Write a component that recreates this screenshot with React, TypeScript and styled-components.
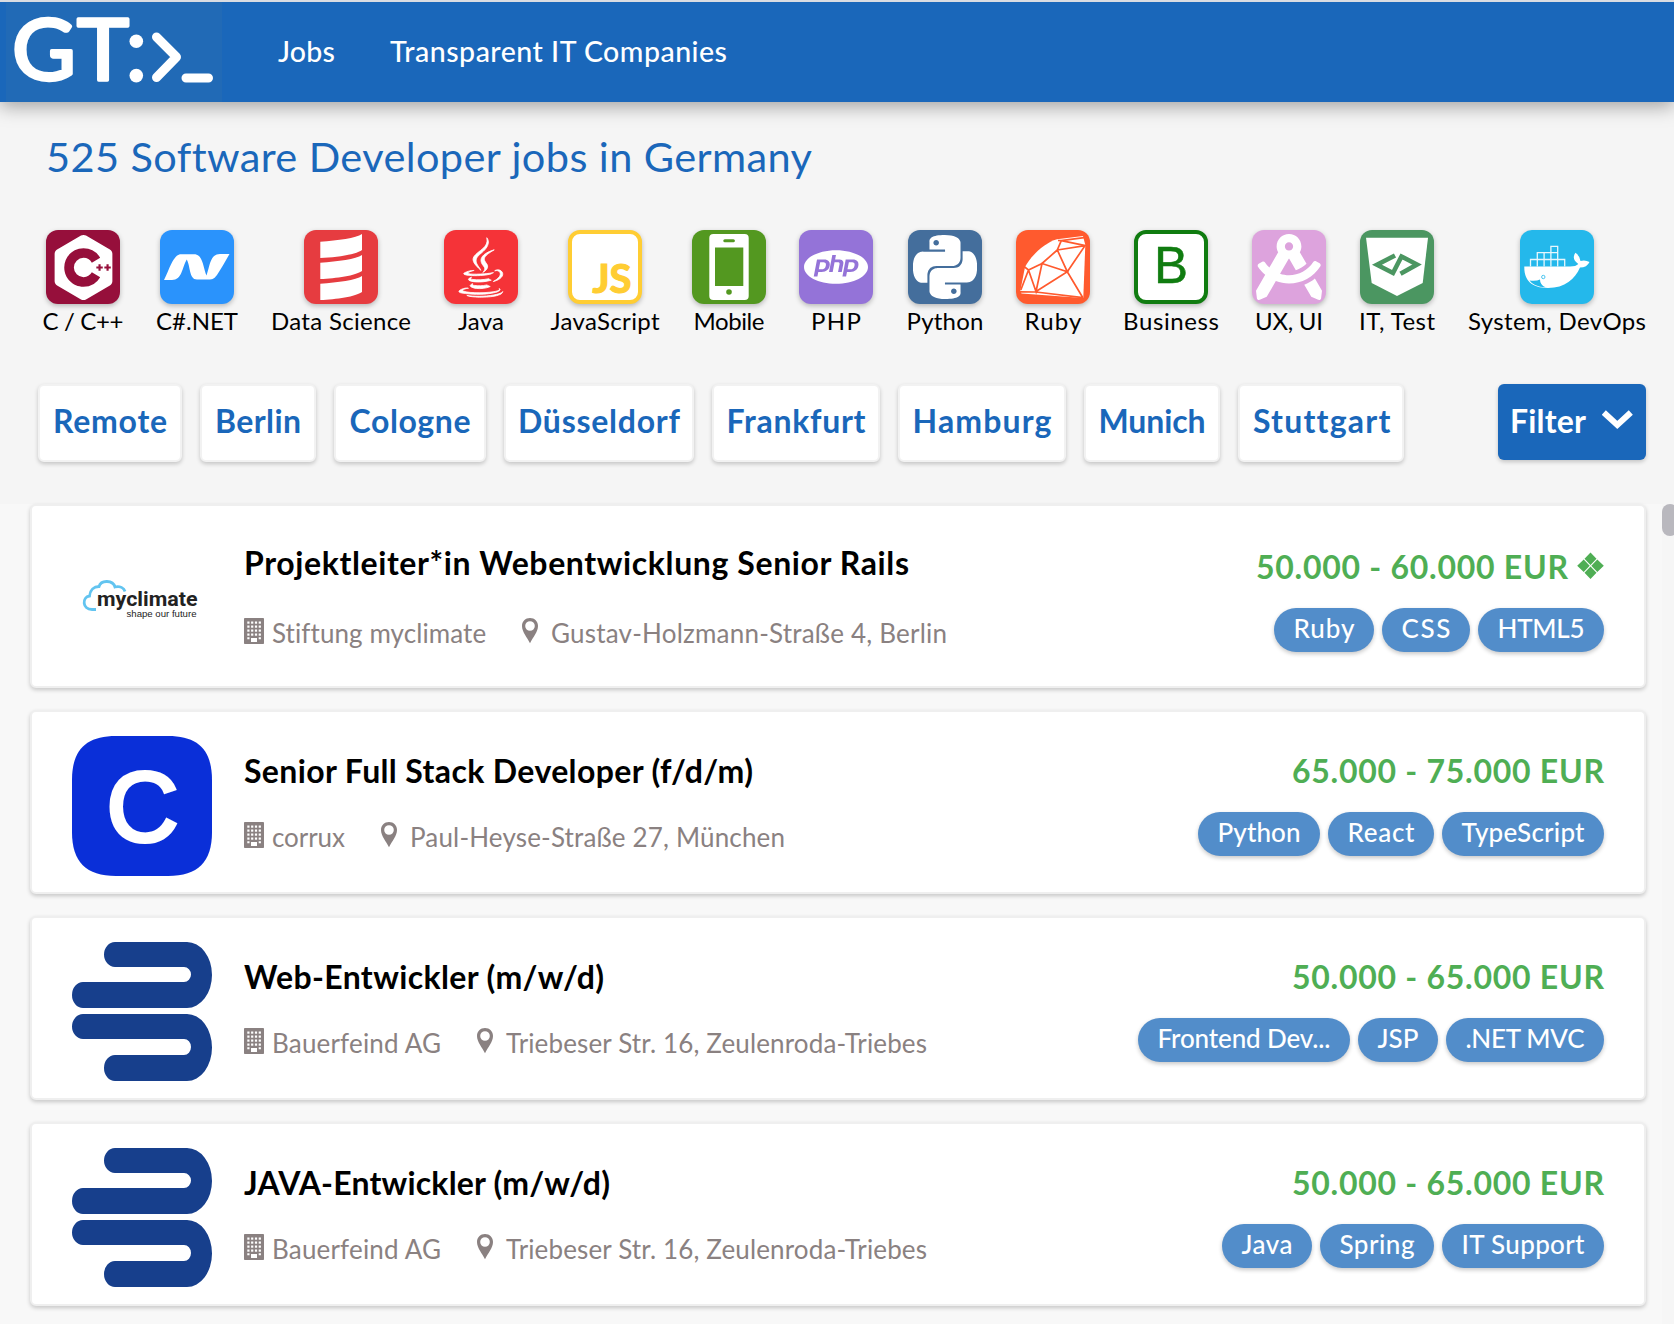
import React, { useLayoutEffect, useRef, useState } from 'react';
import styled, { createGlobalStyle } from 'styled-components';
import { SiCplusplus, SiPhp, SiPython } from 'react-icons/si';
import { DiJava } from 'react-icons/di';
import { FaDraftingCompass } from 'react-icons/fa';

const BLUE = '#1a67ba';

const GlobalStyle = createGlobalStyle`
  * { box-sizing: border-box; }
  body {
    margin: 0;
    background: #f5f5f5;
    font-family: Lato, "Open Sans", sans-serif;
    overflow: hidden;
  }
`;

const Measured = styled.span<{ $width: number }>`
  display: inline-block;
  flex: none;
  width: ${(p) => p.$width}px;
  white-space: pre;
`;

/* Tracks a label so that it fills the given measure. */
function Label({ text, width }: { text: string; width: number }) {
  const inner = useRef<HTMLSpanElement>(null);
  const [tracking, setTracking] = useState(0);
  useLayoutEffect(() => {
    if (!inner.current) return;
    const natural = inner.current.getBoundingClientRect().width - tracking * text.length;
    setTracking((width - natural) / Math.max(1, text.length - 1));
  }, [text, width]);
  return (
    <Measured $width={width}>
      <span ref={inner} style={{ letterSpacing: tracking }}>{text}</span>
    </Measured>
  );
}

const Page = styled.div`
  height: 1324px;
  display: flex;
  flex-direction: column;
  overflow: hidden;
`;

const Header = styled.header`
  flex: none;
  height: 102px;
  display: flex;
  border-top: 2px solid #d9dce2;
  background: ${BLUE};
  box-shadow: 0 4px 18px rgba(0, 0, 0, 0.36);
`;

const Brand = styled.a`
  display: block;
  width: 216px;
  height: 100px;
  margin-left: 6px;
  background: #216ab6;
  svg { overflow: visible; }
`;

const Nav = styled.nav`
  display: flex;
  gap: 55px;
  margin-left: 56px;
  padding-top: 33px;
  color: #fff;
  font-size: 28.5px;
  font-weight: 500;
  line-height: 32px;
`;

const Title = styled.h1`
  flex: none;
  margin: 30px 0 2px 46px;
  color: ${BLUE};
  font-size: 41.5px;
  font-weight: 400;
  line-height: 48px;
`;

const Categories = styled.div`
  flex: none;
  display: flex;
  gap: 32px;
  margin: 48px 0 0 43px;
`;

const Category = styled.a<{ $width: number }>`
  flex: none;
  display: flex;
  flex-direction: column;
  align-items: center;
  width: ${(p) => p.$width}px;
  color: #000;
  font-size: 24px;
  line-height: 34px;
`;

const Tile = styled.div<{ $bg: string; $border?: string }>`
  flex: none;
  display: flex;
  align-items: center;
  justify-content: center;
  width: 74px;
  height: 74px;
  overflow: hidden;
  border-radius: 12px;
  border: ${(p) => (p.$border ? `4.5px solid ${p.$border}` : 'none')};
  background: ${(p) => p.$bg};
  color: #fff;
  box-shadow: 0 2px 5px rgba(0, 0, 0, 0.25);
`;

const ScriptMark = styled.span`
  align-self: flex-end;
  margin: 0 -12px -1px 2px;
  color: #ffcd33;
  font: 700 40px/46px Lato, sans-serif;
  -webkit-text-stroke: 1.2px #ffcd33;
`;

const BusinessMark = styled.span`
  color: #107c10;
  font: 400 51px/60px "Liberation Sans", Arial, sans-serif;
  -webkit-text-stroke: 0.5px #107c10;
  transform: translateY(-1px);
`;

const Filters = styled.div`
  flex: none;
  display: flex;
  gap: 18px;
  height: 78px;
  margin: 46px 28px 0 38px;
`;

const Chip = styled.button<{ $width: number }>`
  flex: none;
  display: flex;
  justify-content: center;
  width: ${(p) => p.$width}px;
  height: 78px;
  padding: 15px 0 0;
  border: 2px solid #f2f2f2;
  border-radius: 6px;
  background: #fff;
  color: ${BLUE};
  font: 700 32px/40px Lato, sans-serif;
  box-shadow: 0 2px 4px rgba(0, 0, 0, 0.2);
`;

const FilterButton = styled.button`
  display: flex;
  gap: 16px;
  width: 148px;
  height: 76px;
  margin-left: auto;
  padding: 17px 0 0 12px;
  border: 0;
  border-radius: 6px;
  background: ${BLUE};
  color: #fff;
  font: 700 32px/40px Lato, sans-serif;
  box-shadow: 0 2px 4px rgba(0, 0, 0, 0.2);
`;

const Results = styled.main`
  flex: 1;
  display: flex;
  justify-content: space-between;
  min-height: 0;
  margin-top: 42px;
  background: #f8f8f8;
`;

const List = styled.div`
  display: flex;
  flex-direction: column;
  gap: 22px;
  width: 1616px;
  margin-left: 30px;
`;

const Track = styled.div`
  width: 12px;
  overflow: hidden;
  background: #f6f6f6;
`;

const Thumb = styled.div`
  width: 16px;
  height: 32px;
  border-radius: 8px;
  background: #b9b8be;
`;

const Card = styled.article`
  flex: none;
  display: flex;
  height: 184px;
  padding: 0 40px;
  border: 2px solid #efefef;
  border-radius: 6px;
  background: #fff;
  box-shadow: 0 2px 4px rgba(0, 0, 0, 0.2);
`;

const Logo = styled.div`
  flex: none;
  width: 140px;
  height: 140px;
  margin: 24px 32px 0 0;
`;

const Info = styled.div<{ $spread: boolean }>`
  display: flex;
  flex-direction: column;
  gap: ${(p) => (p.$spread ? 34 : 30)}px;
  padding-top: ${(p) => (p.$spread ? 37 : 39)}px;
`;

const JobTitle = styled.h2`
  margin: 0;
  color: #000;
  font-size: 32px;
  font-weight: 700;
  line-height: 40px;
`;

const Meta = styled.div`
  display: flex;
  align-items: flex-start;
  height: 32px;
  color: #8a8181;
  font-size: 26px;
  line-height: 32px;
  svg { flex: none; margin-top: 1px; }
`;

const BuildingIcon = styled.svg`
  margin-right: 8px;
`;

const PinIcon = styled.svg`
  margin-left: 36px;
  margin-right: 13px;
`;

const Offer = styled.div<{ $spread: boolean }>`
  display: flex;
  flex-direction: column;
  align-items: flex-end;
  gap: 21px;
  margin-left: auto;
  padding-top: ${(p) => (p.$spread ? 41 : 39)}px;
`;

const Salary = styled.div`
  display: flex;
  gap: 9px;
  height: 40px;
  color: #4fae54;
  font-size: 32px;
  font-weight: 700;
  line-height: 40px;
`;

const Tags = styled.div`
  display: flex;
  gap: 8px;
`;

const Tag = styled.span<{ $width: number }>`
  display: flex;
  justify-content: center;
  width: ${(p) => p.$width}px;
  height: 44px;
  border-radius: 22px;
  background: #528dca;
  color: #fff;
  font-size: 26px;
  font-weight: 500;
  line-height: 40px;
  box-shadow: 0 2px 4px rgba(0, 0, 0, 0.22);
`;

const BrandMark = () => (
  <svg width="216" height="100" viewBox="6 2 216 100" fill="#fff">
    <g fontFamily="Lato, sans-serif" fontWeight="400" fontSize="85" stroke="#fff" strokeWidth="3.4" strokeLinejoin="round">
      <text x="12" y="80.2" textLength="64" lengthAdjust="spacingAndGlyphs">G</text>
      <text x="77" y="80.2" textLength="52" lengthAdjust="spacingAndGlyphs">T</text>
    </g>
    <circle cx="136.3" cy="41.3" r="6.8" />
    <circle cx="136.3" cy="75.6" r="6.8" />
    <path d="M156.5 37 L176.5 57 L156.5 77.5 M186 78 H208.5" fill="none" stroke="#fff" strokeWidth="9" strokeLinecap="round" strokeLinejoin="round" />
  </svg>
);

const DotNetIcon = () => (
  <svg width="74" height="74" fill="#fff">
    <path d="M4 50 C9 41 13 24.3 21 24.3 H34 C43 24.3 43 37 46.5 45.5 C50 36 50 24 60 24 H69.5 C65 32 61 39 57 45 C54 49 52 49.5 49 49.5 H37 C29 49.5 30.5 36 26.7 29.5 C22 38 22 50 12 50 Z" />
  </svg>
);

const ScalaIcon = () => (
  <svg width="74" height="74" fill="#fff">
    {[0, 21, 42].map((y) => (
      <path key={y} transform={`translate(0 ${y})`} d="M16.3 11.7 C34 10.5 52 8 58 4 V20 C52 24.5 32 27.5 16.3 28 Z" />
    ))}
  </svg>
);

const MobileIcon = () => (
  <svg width="74" height="74">
    <rect x="17.3" y="4" width="39.4" height="66" rx="4" fill="#fff" />
    <rect x="23" y="17.5" width="28.3" height="38.5" fill="#539820" />
    <rect x="31.3" y="9.3" width="11.6" height="3" rx="1.5" fill="#539820" />
    <circle cx="37" cy="62" r="2.8" fill="#539820" />
  </svg>
);

const RubyIcon = () => (
  <svg width="74" height="74">
    <path d="M67 6 L69.3 15 L67.3 68 L5.5 63.5 L4.3 61 L9 37 C14 27 28 13 41 9.3 Z" fill="#fff" />
    <path
      d="M42 10.5 L45.3 10.7 L68 7.6 M45.3 10.7 L69.5 15.7 M45.3 10.7 L41.3 20 L69 15.7 L51.3 41.7 L41.3 20 L26 33.5 L12.5 40 L8 36.5 M12.5 40 L4.8 60 M12.5 40 L20 61.5 L26 33.5 L51.3 41.7 L20 61.5 M51.3 41.7 L67 68 M4 61.8 L20 62 L67 67.6"
      fill="none" stroke="#ff5a2e" strokeWidth="1.7"
    />
  </svg>
);

const ShieldIcon = () => (
  <svg width="74" height="74">
    <path d="M6 7.7 H68 L62.7 53 L37 66 L11.7 53 Z" fill="#fff" />
    <path d="M35 25.5 L17 34.7 L33 43 L41.5 26.5 L57 34.5 L40.5 43.8" fill="none" stroke="#4b9661" strokeWidth="4.6" />
  </svg>
);

const DockerIcon = () => (
  <svg width="74" height="74">
    <path d="M4.3 36.5 H50 Q56 36.5 58.3 34 Q51 29 55.5 22.8 Q60 26 60.5 31 Q65 29.5 69.5 32 Q67 37.5 60 37.5 C55 49 45 58 28 58 C11 58 4 50 4.3 36.5 Z" fill="#fff" />
    <path d="M10.5 36.5 V29.5 H44.7 V36.5 M17.3 36.5 V22.7 H37.7 V36.5 M24.1 36.5 V22.7 M30.9 36.5 V16.3 H37.7 V22.7 M17.3 29.5 H37.7" fill="none" stroke="#e8f7fd" strokeWidth="1.3" />
    <path d="M9.5 50.5 Q16 51.5 20 49.5 Q20 55 25.5 57.2 Q14 57 9.5 50.5 Z" fill="#24b8eb" />
    <circle cx="23.3" cy="47" r="1.7" fill="#fff" stroke="#24b8eb" strokeWidth="0.8" />
  </svg>
);

const ChevronDown = () => (
  <svg width="32" height="40" viewBox="0 0 32 40">
    <path d="M1.8 13.5 L15.3 26 L28.8 13.5" transform="translate(0 -2)" fill="none" stroke="#fff" strokeWidth="6" strokeLinejoin="miter" />
  </svg>
);

const Building = () => (
  <BuildingIcon width="20" height="26">
    <rect width="20" height="26" rx="0.8" fill="#8a8181" />
    {[3.5, 7.5, 11.5, 15.5].map((y) =>
      [3.3, 7.1, 10.9, 14.7].map((x) => (
        <rect key={`${x}-${y}`} x={x} y={y} width="2.2" height="2.2" fill="#fff" />
      )),
    )}
    <path d="M3.3 19.2 h2.2 v2 h-2.2 z M14.7 19.2 h2.2 v2 h-2.2 z M7 20 h6 v4 h-6 z" fill="#fff" />
  </BuildingIcon>
);

const Pin = () => (
  <PinIcon width="16" height="26">
    <path fillRule="evenodd" d="M8 0 C12.6 0 16 3.5 16 8 C16 14 11 19 8 25.3 C5 19 0 14 0 8 C0 3.5 3.4 0 8 0 Z M8 3.2 A4.8 4.8 0 1 0 8 12.8 A4.8 4.8 0 1 0 8 3.2 Z" fill="#8a8181" />
  </PinIcon>
);

const Diamonds = () => (
  <svg width="27" height="40" fill="#4fae54">
    <path d="M13.5 5.5 L19.5 11.7 L13.5 17.9 L7.5 11.7 Z M6.7 12.5 L12.7 18.7 L6.7 24.9 L0.2 18.7 Z M20.3 12.5 L26.8 18.7 L20.3 24.9 L14.3 18.7 Z M13.5 19.5 L19.5 25.7 L13.5 32 L7.5 25.7 Z" />
  </svg>
);

const MyclimateLogo = () => (
  <svg width="140" height="140">
    <path d="M24 79.5 H20 C10 79.5 10 67 17.5 66 C18 60 22 56.5 27 56.5 C29 49.5 41 50 43 57 C48 56 52 58 53 61.5" fill="none" stroke="#62c4f0" strokeWidth="2.8" />
    <text x="25" y="75.8" textLength="100.5" lengthAdjust="spacingAndGlyphs" fontFamily="Roboto, sans-serif" fontWeight="700" fontSize="20.5" fill="#222">myclimate</text>
    <text x="54.5" y="86.5" textLength="70" lengthAdjust="spacingAndGlyphs" fontFamily="Liberation Sans, sans-serif" fontSize="8.8" fill="#222">shape our future</text>
  </svg>
);

const CorruxLogo = () => (
  <svg width="140" height="140">
    <path d="M44 0 H96 C126 0 140 14 140 44 V96 C140 126 126 140 96 140 H44 C14 140 0 126 0 96 V44 C0 14 14 0 44 0 Z" fill="#0a2fd8" />
    <text x="34.5" y="105.3" textLength="72" lengthAdjust="spacingAndGlyphs" fontFamily="Liberation Sans, sans-serif" fontSize="99" fill="#fff" stroke="#fff" strokeWidth="4">C</text>
  </svg>
);

const BauerfeindLogo = () => (
  <svg width="140" height="140" fill="#173f8c">
    <path d="M43 0 H115 A25 33 0 0 1 115 66 H11 A11 13 0 0 1 11 40 H112 A7 7.5 0 0 0 112 25 H43 A11 12.5 0 0 1 43 0 Z" />
    <path d="M11 72 H115 A25 33.5 0 0 1 115 139 H43 A11 13 0 0 1 43 113 H112 A7 8 0 0 0 112 97 H11 A11 12.5 0 0 1 11 72 Z" />
  </svg>
);

type CategoryData = { name: string; width: number; text: number; bg: string; border?: string; icon: React.ReactNode };

const categories: CategoryData[] = [
  { name: 'C / C++', width: 80, text: 81, bg: '#960f3b', icon: <SiCplusplus size={65} /> },
  { name: 'C#.NET', width: 84, text: 82, bg: '#2a93fc', icon: <DotNetIcon /> },
  { name: 'Data Science', width: 140, text: 140, bg: '#e63c40', icon: <ScalaIcon /> },
  { name: 'Java', width: 76, text: 46, bg: '#f53338', icon: <DiJava size={86} stroke="#fff" strokeWidth={0.35} /> },
  { name: 'JavaScript', width: 108, text: 109, bg: '#fff', border: '#ffcd33', icon: <ScriptMark>JS</ScriptMark> },
  { name: 'Mobile', width: 76, text: 71, bg: '#539820', icon: <MobileIcon /> },
  { name: 'PHP', width: 74, text: 50, bg: '#9473d8', icon: <SiPhp size={64} /> },
  { name: 'Python', width: 80, text: 77, bg: '#446e9c', icon: <SiPython size={64} /> },
  { name: 'Ruby', width: 72, text: 57, bg: '#ff5a2e', icon: <RubyIcon /> },
  { name: 'Business', width: 100, text: 96, bg: '#fff', border: '#107c10', icon: <BusinessMark>B</BusinessMark> },
  { name: 'UX, UI', width: 72, text: 68, bg: '#dda3dd', icon: <FaDraftingCompass size={66} /> },
  { name: 'IT, Test', width: 80, text: 76, bg: '#4b9661', icon: <ShieldIcon /> },
  { name: 'System, DevOps', width: 176, text: 178, bg: '#24b8eb', icon: <DockerIcon /> },
];

const cities = [
  { name: 'Remote', width: 144, text: 114 },
  { name: 'Berlin', width: 116, text: 86 },
  { name: 'Cologne', width: 152, text: 121 },
  { name: 'Düsseldorf', width: 190, text: 162 },
  { name: 'Frankfurt', width: 168, text: 139 },
  { name: 'Hamburg', width: 168, text: 139 },
  { name: 'Munich', width: 136, text: 107 },
  { name: 'Stuttgart', width: 166, text: 136 },
];

type Sized = [text: string, width: number];
type Job = {
  logo: React.ReactNode;
  title: Sized;
  company: Sized;
  address: Sized;
  salary: Sized;
  tags: [name: string, pill: number][];
  verified?: boolean;
};

const jobs: Job[] = [
  {
    logo: <MyclimateLogo />,
    title: ['Projektleiter*in Webentwicklung Senior Rails', 665],
    company: ['Stiftung myclimate', 214],
    address: ['Gustav-Holzmann-Straße 4, Berlin', 396],
    salary: ['50.000 - 60.000 EUR', 312],
    tags: [['Ruby', 100], ['CSS', 88], ['HTML5', 126]],
    verified: true,
  },
  {
    logo: <CorruxLogo />,
    title: ['Senior Full Stack Developer (f/d/m)', 509],
    company: ['corrux', 73],
    address: ['Paul-Heyse-Straße 27, München', 375],
    salary: ['65.000 - 75.000 EUR', 312],
    tags: [['Python', 122], ['React', 106], ['TypeScript', 162]],
  },
  {
    logo: <BauerfeindLogo />,
    title: ['Web-Entwickler (m/w/d)', 360],
    company: ['Bauerfeind AG', 169],
    address: ['Triebeser Str. 16, Zeulenroda-Triebes', 421],
    salary: ['50.000 - 65.000 EUR', 312],
    tags: [['Frontend Dev...', 212], ['JSP', 80], ['.NET MVC', 158]],
  },
  {
    logo: <BauerfeindLogo />,
    title: ['JAVA-Entwickler (m/w/d)', 366],
    company: ['Bauerfeind AG', 169],
    address: ['Triebeser Str. 16, Zeulenroda-Triebes', 421],
    salary: ['50.000 - 65.000 EUR', 312],
    tags: [['Java', 90], ['Spring', 114], ['IT Support', 162]],
  },
];

export default function App() {
  return (
    <Page>
      <GlobalStyle />
      <Header>
        <Brand><BrandMark /></Brand>
        <Nav>
          <Label text="Jobs" width={57} />
          <Label text="Transparent IT Companies" width={337} />
        </Nav>
      </Header>
      <Title><Label text="525 Software Developer jobs in Germany" width={765} /></Title>
      <Categories>
        {categories.map((c) => (
          <Category key={c.name} $width={c.width}>
            <Tile $bg={c.bg} $border={c.border}>{c.icon}</Tile>
            <Label text={c.name} width={c.text} />
          </Category>
        ))}
      </Categories>
      <Filters>
        {cities.map((c) => (
          <Chip key={c.name} $width={c.width}><Label text={c.name} width={c.text} /></Chip>
        ))}
        <FilterButton>
          <Label text="Filter" width={76} />
          <ChevronDown />
        </FilterButton>
      </Filters>
      <Results>
        <List>
          {jobs.map((job) => (
            <Card key={job.title[0]}>
              <Logo>{job.logo}</Logo>
              <Info $spread={!!job.verified}>
                <JobTitle><Label text={job.title[0]} width={job.title[1]} /></JobTitle>
                <Meta>
                  <Building />
                  <Label text={job.company[0]} width={job.company[1]} />
                  <Pin />
                  <Label text={job.address[0]} width={job.address[1]} />
                </Meta>
              </Info>
              <Offer $spread={!!job.verified}>
                <Salary>
                  <Label text={job.salary[0]} width={job.salary[1]} />
                  {job.verified && <Diamonds />}
                </Salary>
                <Tags>
                  {job.tags.map(([name, pill]) => (
                    <Tag key={name} $width={pill}><Label text={name} width={pill - 39} /></Tag>
                  ))}
                </Tags>
              </Offer>
            </Card>
          ))}
        </List>
        <Track><Thumb /></Track>
      </Results>
    </Page>
  );
}
